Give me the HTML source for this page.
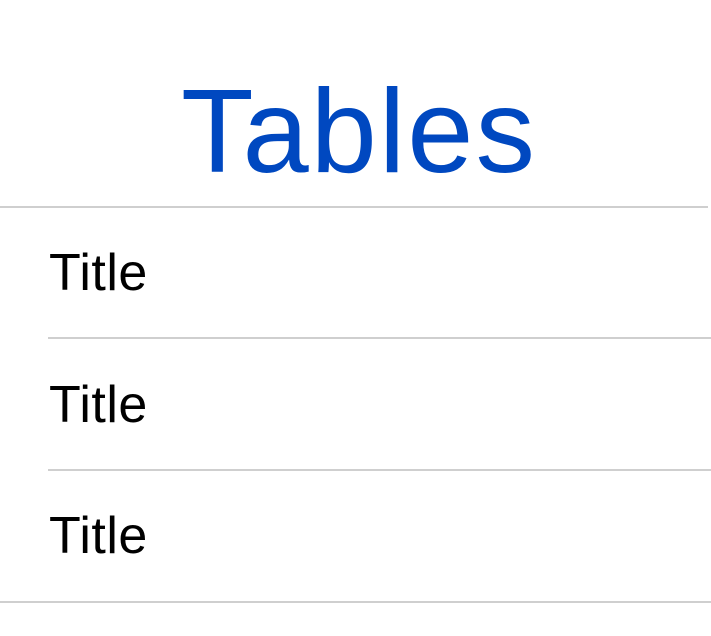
<!DOCTYPE html>
<html><head><meta charset="utf-8"><style>
html,body{margin:0;padding:0;background:#fff;width:711px;height:636px;overflow:hidden;position:relative;font-family:"Liberation Sans",sans-serif}
.t{position:absolute;line-height:1;white-space:nowrap}
.h{left:181px;top:72px;font-size:119px;color:#0048c0;letter-spacing:2px}
.r{left:49px;font-size:52px;color:#000;letter-spacing:0.5px}
.l{position:absolute;height:2px;background:#cfcfcf}
</style></head><body>
<div class="t h">Tables</div>
<div class="l" style="left:0;width:708px;top:206px"></div>
<div class="t r" style="top:247px">Title</div>
<div class="l" style="left:48px;width:663px;top:337px"></div>
<div class="t r" style="top:379px">Title</div>
<div class="l" style="left:48px;width:663px;top:469px"></div>
<div class="t r" style="top:510px">Title</div>
<div class="l" style="left:0;width:711px;top:601px"></div>
</body></html>
